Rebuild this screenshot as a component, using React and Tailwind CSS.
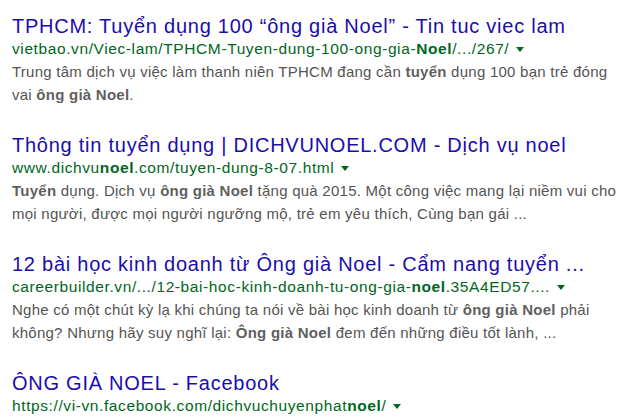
import React from "react";

const B = ({ children }) => <b className="font-bold text-[#5f5f5f]">{children}</b>;
const G = ({ children }) => <b className="font-bold">{children}</b>;

const Arrow = () => (
  <span className="inline-block align-middle ml-[7px] mb-[1px] w-0 h-0 border-l-[4.5px] border-r-[4.5px] border-t-[5px] border-l-transparent border-r-transparent border-t-[#006621]" />
);

function Result({ title, url, lines }) {
  return (
    <div className="mb-[27px]">
      <div className="text-[20px] leading-[24px] tracking-[0.75px] text-[#1a0dab] whitespace-nowrap">{title}</div>
      <div className="text-[15.5px] leading-[22px] tracking-[0.6px] text-[#006621] whitespace-nowrap">
        {url}
        <Arrow />
      </div>
      {lines.map((l, i) => (
        <div key={i} className="text-[15px] leading-[23px] tracking-[0.25px] text-[#545454] whitespace-nowrap">
          {l}
        </div>
      ))}
    </div>
  );
}

export default function App() {
  return (
    <div
      className="w-[628px] h-[416px] overflow-hidden bg-white pl-[12px] pt-[14px]"
      style={{ fontFamily: '"Liberation Sans", Arial, sans-serif' }}
    >
      <Result
        title="TPHCM: Tuyển dụng 100 “ông già Noel” - Tin tuc viec lam"
        url={<>vietbao.vn/Viec-lam/TPHCM-Tuyen-dung-100-ong-gia-<G>Noel</G>/.../267/</>}
        lines={[
          <>Trung tâm dịch vụ việc làm thanh niên TPHCM đang cần <B>tuyển</B> dụng 100 bạn trẻ đóng</>,
          <>vai <B>ông già Noel</B>.</>,
        ]}
      />
      <Result
        title="Thông tin tuyển dụng | DICHVUNOEL.COM - Dịch vụ noel"
        url={<>www.dichvu<G>noel</G>.com/tuyen-dung-8-07.html</>}
        lines={[
          <><B>Tuyển</B> dụng. Dịch vụ <B>ông già Noel</B> tặng quà 2015. Một công việc mang lại niềm vui cho</>,
          <>mọi người, được mọi người ngưỡng mộ, trẻ em yêu thích, Cùng bạn gái ...</>,
        ]}
      />
      <Result
        title="12 bài học kinh doanh từ Ông già Noel - Cẩm nang tuyển ..."
        url={<>careerbuilder.vn/.../12-bai-hoc-kinh-doanh-tu-ong-gia-<G>noel</G>.35A4ED57....</>}
        lines={[
          <>Nghe có một chút kỳ lạ khi chúng ta nói về bài học kinh doanh từ <B>ông già Noel</B> phải</>,
          <>không? Nhưng hãy suy nghĩ lại: <B>Ông già Noel</B> đem đến những điều tốt lành, ...</>,
        ]}
      />
      <Result
        title="ÔNG GIÀ NOEL - Facebook"
        url={<>https://vi-vn.facebook.com/dichvuchuyenphat<G>noel</G>/</>}
        lines={[]}
      />
    </div>
  );
}
